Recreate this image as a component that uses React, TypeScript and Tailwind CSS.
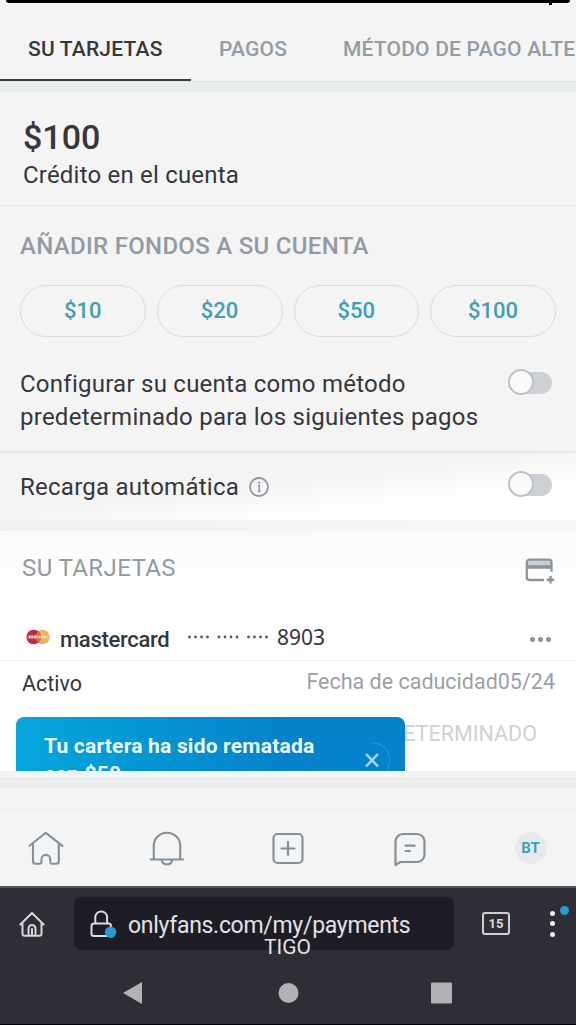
import clsx from "clsx";

const amounts = ["$10", "$20", "$50", "$100"];

function Toggle() {
  return (
    <span className="relative flex h-[23px] w-11 items-center justify-end">
      <span className="h-[22px] w-9 rounded-full bg-[#cdd0d4]" />
      <span className="absolute top-[-2px] left-0 size-[26px] rounded-full border-2 border-[#bdc1ca] bg-[#fafafb]" />
    </span>
  );
}

function InfoIcon() {
  return (
    <svg viewBox="0 0 22 22" className="size-[22px]" fill="none" stroke="#8f97a3" strokeWidth="1.8">
      <circle cx="11" cy="11" r="9" />
      <path d="M9.8 9.5h1.5v5.6M9.8 15.2h2.8" strokeWidth="1.5" />
      <circle cx="11.2" cy="6.7" r="1.1" fill="#8f97a3" stroke="none" />
    </svg>
  );
}

function AddCardIcon() {
  return (
    <svg viewBox="0 0 32 28" className="h-7 w-8" fill="none" stroke="#8d949c">
      <path d="M3 4h24v7H3z" fill="#c9ced2" stroke="none" />
      <path d="M20 24H5.5a2.7 2.7 0 0 1-2.7-2.7V6.4a2.7 2.7 0 0 1 2.7-2.7h19.3a2.7 2.7 0 0 1 2.7 2.7v9.4" strokeWidth="2.3" />
      <path d="M3 11h24.5" strokeWidth="3.6" />
      <path d="M26.5 20v7.4M22.8 23.7h7.4" strokeWidth="2.5" />
    </svg>
  );
}

function MastercardLogo() {
  return (
    <svg viewBox="0 0 24 16" className="h-4 w-6">
      <circle cx="16.5" cy="8" r="7.3" fill="#e8b95a" />
      <circle cx="7.7" cy="8" r="7.3" fill="#c32b3d" />
      <path d="M12.2 2.3a7.3 7.3 0 0 1 0 11.4a7.3 7.3 0 0 1 0-11.4" fill="#dc6b45" />
      <path d="M2.5 8h9" stroke="#f3dcdc" strokeWidth="3" strokeDasharray="2.2 .5" />
      <path d="M12.5 8h9" stroke="#f6e3bb" strokeWidth="2.4" strokeDasharray="2.2 .5" />
    </svg>
  );
}

function MaskedDigits() {
  return (
    <svg viewBox="0 0 84 4" className="h-1 w-[84px]" fill="#55575b">
      {[0, 29.5, 59].map((group) =>
        [0, 6, 12, 18].map((dot) => (
          <circle key={group + dot} cx={group + dot + 2.5} cy="2" r="1.4" />
        )),
      )}
    </svg>
  );
}

function BottomNav() {
  return (
    <nav className="flex h-[77px] shrink-0 items-center border-t border-[#eeeeef] text-[#84919b]">
      <span className="flex w-[91px] justify-center">
        <svg viewBox="0 0 36 36" className="size-9" fill="none" stroke="currentColor" strokeWidth="2.1" strokeLinecap="round" strokeLinejoin="round">
          <path d="M1.5 15.8 17.8 2.8 34.5 15.8M5 13.6v17.7a2.5 2.5 0 0 0 2.5 2.5h4.3q1.7 0 1.7-1.7v-2.8a4.3 4.3 0 0 1 8.8 0v2.8q0 1.7 1.7 1.7h4.3a2.5 2.5 0 0 0 2.5-2.5V13.6" />
        </svg>
      </span>
      <span className="flex w-[151px] justify-center">
        <svg viewBox="0 0 36 36" className="size-9" fill="none" stroke="currentColor" strokeWidth="2.1" strokeLinecap="round">
          <path d="M1.8 29.5h32.4M4.8 29V15.5a13.2 12.7 0 0 1 26.4 0V29M12.8 30.2a5.3 5.1 0 0 0 10.4 0" />
        </svg>
      </span>
      <span className="flex w-[92px] justify-center">
        <svg viewBox="0 0 36 36" className="size-9" fill="none" stroke="currentColor" strokeWidth="2.2" strokeLinecap="round">
          <rect x="3.5" y="4" width="29" height="29" rx="4" />
          <path d="M18 12v13M11.5 18.5h13" />
        </svg>
      </span>
      <span className="flex w-[151px] justify-center">
        <svg viewBox="0 0 36 38" className="mt-0.5 h-[38px] w-9" fill="none" stroke="currentColor" strokeWidth="2.2" strokeLinecap="round" strokeLinejoin="round">
          <path d="M3.5 35V11.5a7.5 7.5 0 0 1 7.5-7.5h14a7.5 7.5 0 0 1 7.5 7.5v13a7.5 7.5 0 0 1-7.5 7.5H8.5z" />
          <path d="M13.5 15.7h9M13.5 21h4.5" />
        </svg>
      </span>
      <span className="flex flex-1 justify-center">
        <span className="flex size-8 items-center justify-center rounded-full bg-[#e7e9ea] text-[15px] font-bold text-[#3b9fb9]">
          BT
        </span>
      </span>
    </nav>
  );
}

function BrowserBar() {
  return (
    <footer className="relative flex h-[139px] shrink-0 flex-col border-b border-black bg-[#2f2d36]">
      <div className="flex h-[76px] shrink-0 items-center border-t-2 border-[#56545c] pb-[3px]">
        <svg viewBox="0 0 28 28" className="ml-[18px] size-7" fill="none" stroke="#d7d6da" strokeWidth="2" strokeLinecap="round" strokeLinejoin="round">
          <path d="M2.3 14.5 14 3l11.7 11.5M4.5 12.8v11a2 2 0 0 0 2 2h15a2 2 0 0 0 2-2v-11M10.5 25.5v-7a3.5 3.5 0 0 1 7 0v7M14 19v6" />
        </svg>
        <div className="ml-7 flex h-[53px] w-[380px] items-center rounded-lg bg-[#1e1c24] pl-4">
          <svg viewBox="0 0 28 28" className="mt-px size-7 shrink-0" fill="none" stroke="#dcdbdf" strokeWidth="2">
            <rect x="1.5" y="13.5" width="19.5" height="12.5" rx="2.5" />
            <path d="M5.3 13.5V7.3a5.9 5.9 0 0 1 11.8 0v6.2" />
            <circle cx="20.6" cy="22.3" r="5.7" fill="#279bd3" stroke="none" />
          </svg>
          <span className="mt-[6px] ml-[10px] text-[23px] tracking-[-0.3px] text-[#e3e2e6]">
            onlyfans.com/my/payments
          </span>
        </div>
        <span className="ml-7 flex h-[23px] w-7 items-center justify-center rounded-[3px] border-2 border-[#cfced2] text-[13px] font-bold text-[#dcdbdf]">
          15
        </span>
        <span className="relative ml-[38px] flex h-[26px] w-2 flex-col items-center justify-between">
          <i className="size-[5px] rounded-full bg-[#efeef1]" />
          <i className="size-[5px] rounded-full bg-[#efeef1]" />
          <i className="size-[5px] rounded-full bg-[#efeef1]" />
          <i className="absolute top-[-5px] left-[12px] size-[9px] rounded-full bg-[#279bd3]" />
        </span>
      </div>
      <span className="absolute top-[49px] left-[264px] text-[21px] leading-6 text-[#e3e2e6]">TIGO</span>
      <svg viewBox="0 0 576 62" className="h-[62px] w-full" fill="#b2b1b5">
        <path d="M123 31 142 20V42z" />
        <circle cx="288.5" cy="31" r="10" />
        <rect x="431" y="20.5" width="21" height="21" rx="1" />
      </svg>
    </footer>
  );
}

export default function App() {
  return (
    <div className="flex h-[1025px] w-[576px] flex-col overflow-hidden bg-[#f4f4f4] font-['Roboto',sans-serif] text-[#36373b]">
      <div className="flex h-[5px] shrink-0 justify-center">
        <div className="h-[3px] w-[564px] rounded-b-md bg-black" />
        <div className="absolute left-[549px] h-[5px] w-[3px] bg-black" />
      </div>

      <nav className="flex h-[76px] shrink-0 text-[21px] leading-[88px] font-medium tracking-[0.2px] whitespace-nowrap">
        {["SU TARJETAS", "PAGOS", "MÉTODO DE PAGO ALTERNATIVO"].map((tab, i) => (
          <span
            key={tab}
            className={clsx(
              "h-full shrink-0",
              i === 0 && "w-[191px] border-b-2 border-[#3b3b40] pl-7",
              i === 1 && "w-[124px] pl-7 text-[#929ca5]",
              i === 2 && "pl-7 text-[#929ca5]",
            )}
          >
            {tab}
          </span>
        ))}
      </nav>
      <div className="h-[11px] shrink-0 border-t border-[#dde2e6] bg-[#eaedee]" />

      <section className="h-[115px] shrink-0 border-b-2 border-[#ebebec] pt-[25px] pl-[23px]">
        <h1 className="text-[34px] leading-10 font-medium">$100</h1>
        <p className="text-[24px] leading-9 tracking-[0.2px]">Crédito en el cuenta</p>
      </section>

      <section className="h-[246px] shrink-0 border-b-2 border-[#e8e8e9] px-5">
        <h2 className="pt-[23px] text-[24px] leading-8 font-medium tracking-[0.3px] text-[#929aa5]">
          AÑADIR FONDOS A SU CUENTA
        </h2>
        <div className="mt-[23px] grid grid-cols-4 gap-[11px]">
          {amounts.map((amount) => (
            <button
              key={amount}
              className="h-[52px] rounded-full border border-[#d9dbde] pb-0.5 text-[22px] font-medium text-[#419fb5]"
            >
              {amount}
            </button>
          ))}
        </div>
        <div className="mt-[31px] flex justify-between">
          <p className="text-[24px] leading-[33px] tracking-[0.25px] whitespace-nowrap">
            Configurar su cuenta como método
            <br />
            predeterminado para los siguientes pagos
          </p>
          <span className="mt-[3px] mr-1 -ml-4">
            <Toggle />
          </span>
        </div>
      </section>

      <section className="flex h-[67px] shrink-0 items-center justify-between bg-linear-to-br from-[#f4f4f4] from-45% to-white to-75% pr-6 pl-5">
        <div className="flex items-center gap-[9px] text-[24px] tracking-[0.25px]">
          Recarga automática
          <InfoIcon />
        </div>
        <span className="pb-1">
          <Toggle />
        </span>
      </section>
      <div className="h-[11px] shrink-0 bg-linear-to-r from-[#eff1f1] to-[#f6f8fb]" />

      <section className="relative h-[240px] shrink-0 overflow-hidden bg-linear-to-b from-[#fafafa] to-white to-30%">
        <div className="flex h-[78px] items-center justify-between pr-5 pl-[22px]">
          <h2 className="pb-1 text-[24px] tracking-[0.4px] text-[#929aa2]">SU TARJETAS</h2>
          <AddCardIcon />
        </div>
        <div className="flex h-[52px] items-center border-b border-[#ededee] pt-1 pr-[25px] pl-[26px]">
          <MastercardLogo />
          <span className="mt-[5px] ml-2.5 w-[127px] text-[22px] font-medium tracking-[-0.3px]">mastercard</span>
          <MaskedDigits />
          <span className="mt-[3px] ml-[6px] font-['Noto_Sans',sans-serif] text-[21px]">8903</span>
          <span className="mt-1.5 ml-auto flex gap-[3px]">
            <i className="size-[5px] rounded-full bg-[#8b949f]" />
            <i className="size-[5px] rounded-full bg-[#8b949f]" />
            <i className="size-[5px] rounded-full bg-[#8b949f]" />
          </span>
        </div>
        <div className="flex h-[43px] items-center justify-between pr-[21px] pl-[22px] text-[21.5px]">
          <span className="pt-[3px]">Activo</span>
          <span className="text-[#9b9fa8]">Fecha de caducidad05/24</span>
        </div>
        <p className="pt-4 pr-[39px] text-right text-[21.5px] leading-7 text-[#ced2d7]">PREDETERMINADO</p>

        {/* Toast sliding in over the card details */}
        <div className="absolute top-[186px] left-4 flex h-[76px] w-[389px] justify-between rounded-lg bg-linear-to-r from-[#05a7dc] to-[#0582cb] to-70% pt-[14px] pr-[15px] pl-7">
          <p className="pt-px text-[21px] leading-[28px] font-bold tracking-[0.2px] whitespace-nowrap text-[#f0f9fe]">
            Tu cartera ha sido rematada
            <br />
            con $50
          </p>
          <svg viewBox="0 0 36 36" className="mt-[11px] size-9" fill="none">
            <path d="M18 1a17 17 0 0 1 13 29" stroke="#2d99d6" />
            <path d="m12 12 12 12.5m0-12.5-12 12.5" stroke="#a9d5ef" strokeWidth="2.5" />
          </svg>
        </div>
      </section>
      <div className="mb-[21px] h-[17px] shrink-0 border-t-[6px] border-[#f3f4f4] bg-[#ebecec]" />

      <BottomNav />
      <BrowserBar />
    </div>
  );
}
